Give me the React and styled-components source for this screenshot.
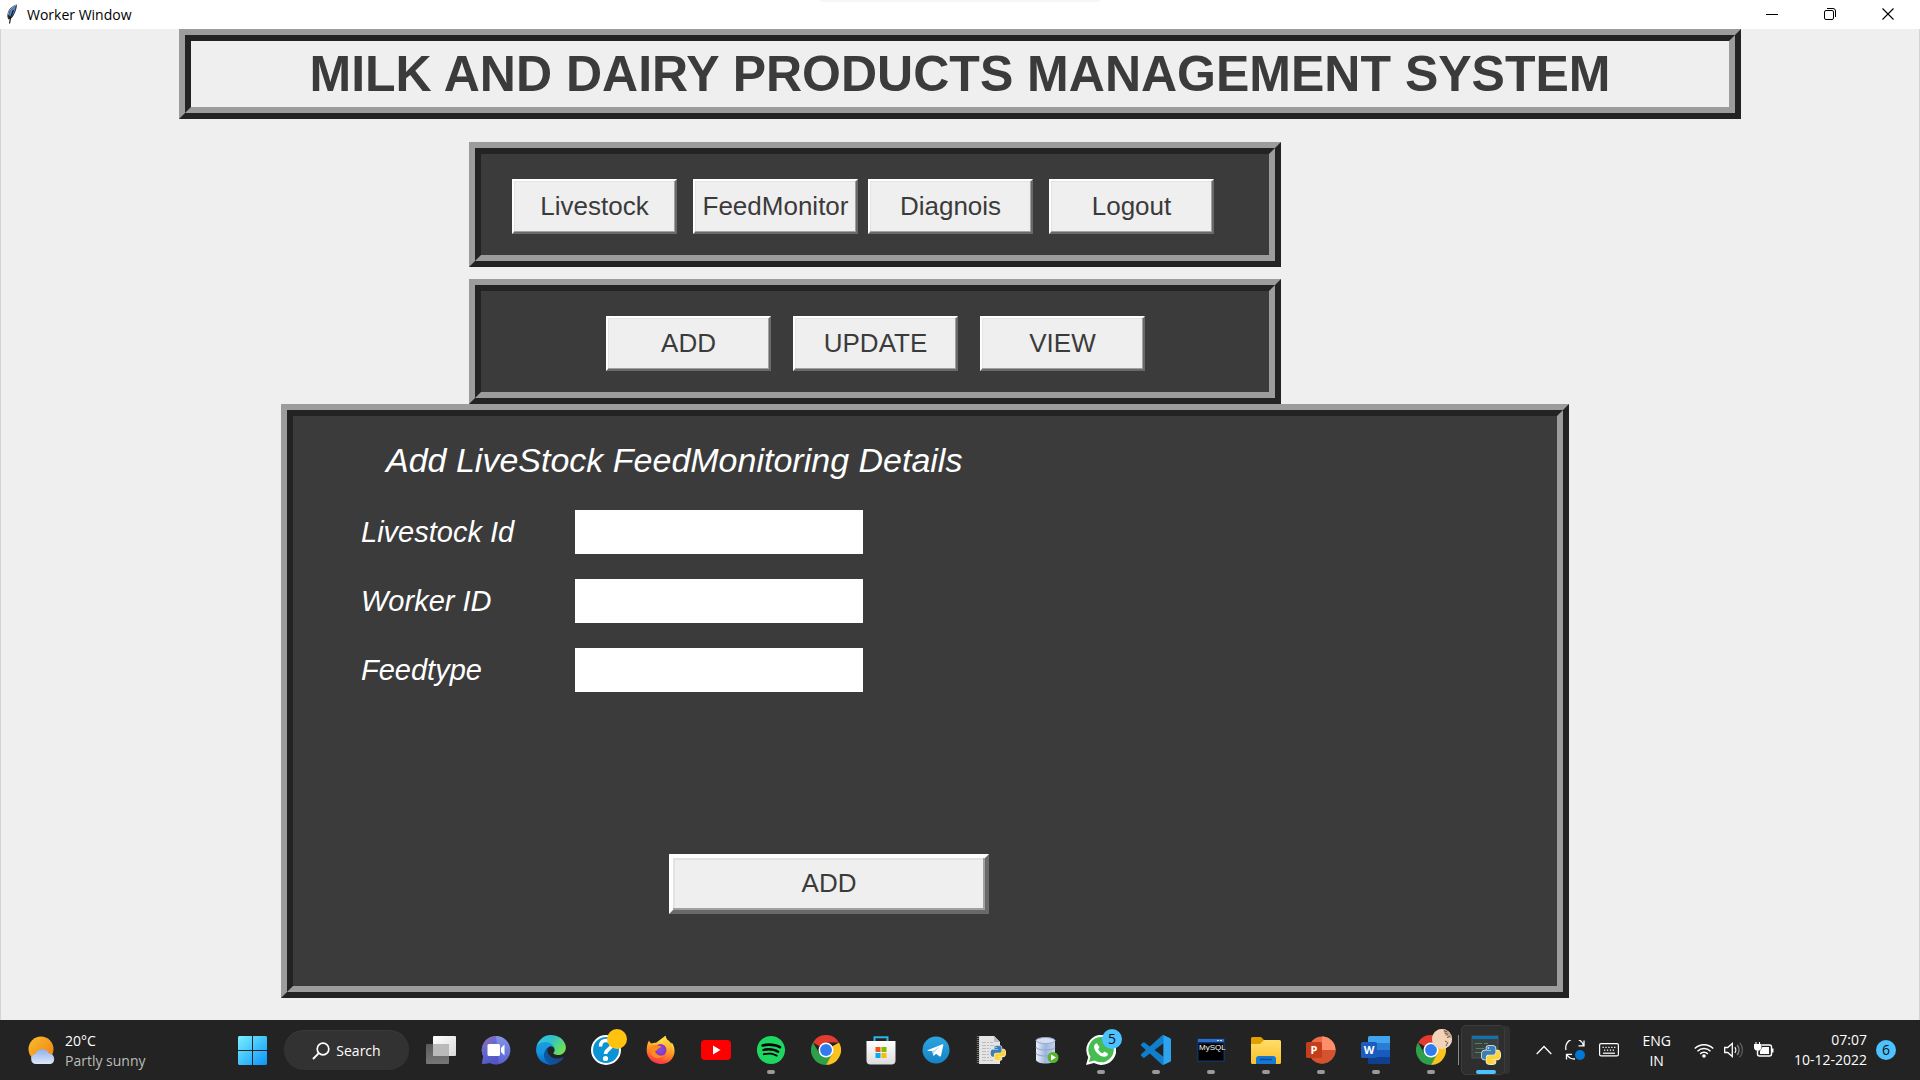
import React from "react";
import styled, { createGlobalStyle, css } from "styled-components";
import { FaSpotify } from "react-icons/fa";

const ui = '"Open Sans", "Noto Sans", sans-serif';
const tk = '"Liberation Sans", Arial, sans-serif';

const Global = createGlobalStyle`
  * { box-sizing: border-box; }
  body { margin: 0; background: #efefef; font-family: ${tk}; }
  button { font-family: inherit; margin: 0; }
  svg { display: block; }
`;

const Desktop = styled.div`
  display: flex;
  flex-direction: column;
  min-height: 100vh;
`;

/* ---------- window chrome ---------- */

const TitleBar = styled.header`
  position: relative;
  display: flex;
  align-items: center;
  height: 29px;
  padding: 0 3px 0 6px;
  background: #fff;
  font-family: ${ui};
`;

const PeekShadow = styled.div`
  position: absolute;
  top: 0;
  left: 50%;
  width: 280px;
  height: 2px;
  margin-left: -140px;
  border-radius: 0 0 4px 4px;
  background: #f6f6f6;
`;

const WindowTitle = styled.span`
  flex: 1;
  margin-left: 9px;
  font-size: 14px;
  line-height: 20px;
  color: #000;
`;

const WindowButton = styled.button`
  display: grid;
  place-items: center;
  width: 58px;
  height: 29px;
  padding: 0 0 2px;
  border: 0;
  background: transparent;
`;

/* ---------- tk frames ---------- */

const Stage = styled.main`
  flex: 1;
  border: solid #d4d4d4;
  border-width: 0 1px;
  background: #efefef;
`;

const Band = styled.div`
  display: grid;
  grid-template-columns: ${(p) => p.$columns};
  margin-top: ${(p) => p.$gap || 0}px;

  > * {
    grid-column: 2;
  }
`;

const ridge = css`
  border: 6px solid;
  border-color: #9c9c9c #232323 #232323 #9c9c9c;
`;

const Ridge = styled.div`
  ${ridge}
`;

const Groove = styled.div`
  height: 100%;
  border: 6px solid;
  border-color: #232323 #9c9c9c #9c9c9c #232323;
  background: ${(p) => (p.$light ? "#efefef" : "#3b3b3b")};
`;

const Banner = styled.h1`
  margin: 0;
  padding: 3px 0;
  text-align: center;
  font-size: 50px;
  line-height: 60px;
  font-weight: 700;
  color: #3b3b3b;
`;

const ButtonRow = styled.nav`
  display: flex;
  gap: ${(p) => p.$gap}px;
  padding: 25px 0 21px ${(p) => p.$start}px;
`;

const ButtonPair = styled.div`
  display: flex;
  gap: 16px;
`;

const TkButton = styled.button`
  width: ${(p) => (p.$large ? 320 : 165)}px;
  height: ${(p) => (p.$large ? 60 : 55)}px;
  padding: 0 0 2px;
  border: ${(p) => (p.$large ? 4 : 2)}px solid;
  border-color: #fff #696969 #696969 #fff;
  background: #efefef;
  box-shadow: ${(p) =>
    p.$large
      ? "inset -2px -2px #a0a0a0, inset 2px 2px #e3e3e3"
      : "inset -1px -1px #a0a0a0, inset 1px 1px #e3e3e3"};
  font-size: 26px;
  line-height: 30px;
  color: #3b3b3b;
  white-space: nowrap;
`;

const Form = styled.form`
  padding: 24px 0 72px 68px;
  font-style: italic;
  color: #fff;
`;

const FormTitle = styled.h2`
  margin: 0 0 30px 25px;
  font-size: 34px;
  line-height: 40px;
  font-weight: 400;
`;

const Fields = styled.div`
  display: grid;
  gap: 25px;
`;

const Field = styled.div`
  display: grid;
  grid-template-columns: 214px 288px;
  align-items: center;
`;

const FieldLabel = styled.label`
  font-size: 29px;
  line-height: 34px;
`;

const Entry = styled.input`
  width: 100%;
  height: 44px;
  padding: 0 8px;
  border: 0;
  border-radius: 0;
  background: #fff;
  font: italic 26px ${tk};
  color: #3b3b3b;
`;

const Actions = styled.div`
  padding: 162px 0 0 308px;
`;

/* ---------- taskbar ---------- */

const Taskbar = styled.footer`
  display: grid;
  grid-template-columns: 238px auto 1fr;
  align-items: center;
  height: 60px;
  background: #232323;
  font-family: ${ui};
  font-size: 14px;
  line-height: 20px;
  color: #fff;
`;

const Weather = styled.button`
  display: flex;
  align-items: center;
  gap: 9px;
  padding: 0 0 0 28px;
  border: 0;
  background: transparent;
  font-size: 14px;
  line-height: 20px;
  text-align: left;
  color: #fff;
`;

const WeatherText = styled.div`
  padding-top: 2px;
`;

const Muted = styled.div`
  color: #bdbdbd;
`;

const Apps = styled.div`
  display: flex;
  align-items: center;
`;

const StartButton = styled.button`
  padding: 0;
  border: 0;
  background: transparent;
`;

const SearchButton = styled.button`
  display: flex;
  align-items: center;
  justify-content: center;
  gap: 6px;
  width: 125px;
  height: 40px;
  margin: 0 4px 0 17px;
  padding: 1px 0 0;
  border: 0;
  border-radius: 20px;
  background: #323232;
  box-shadow: inset 0 1px #3a3a3a;
  font-size: 14px;
  line-height: 20px;
  color: #fff;
`;

const AppButton = styled.button`
  position: relative;
  display: grid;
  place-items: center;
  width: 55px;
  height: 60px;
  padding: 0;
  border: 0;
  background: transparent;

  &::after {
    content: "";
    position: absolute;
    bottom: 6px;
    left: 50%;
    width: ${(p) => (p.$active ? 20 : 8)}px;
    height: 4px;
    margin-left: ${(p) => (p.$active ? -10 : -4)}px;
    border-radius: 2px;
    background: ${(p) =>
      p.$active ? "#4cc2ff" : p.$open ? "#9a9a9a" : "transparent"};
  }
`;

const ActiveTile = styled.span`
  position: absolute;
  top: 5px;
  left: 3px;
  width: 44px;
  height: 50px;
  border: 1px solid #3c3c3c;
  border-radius: 5px;
  background: #2e2e2e;
  box-shadow: 6px 0 0 -1px #313131;
`;

const Divider = styled.span`
  position: absolute;
  top: 15px;
  left: 0;
  width: 1px;
  height: 30px;
  background: #8a8a8a;
`;

const AppIcon = styled.span`
  position: relative;
`;

const AppBadge = styled.span`
  position: absolute;
  top: 9px;
  left: 29px;
  width: 20px;
  height: 20px;
  border-radius: 50%;
  background: ${(p) => p.$color};
  font-size: 14px;
  line-height: 20px;
  text-align: center;
  color: #111;
`;

const Tray = styled.div`
  display: flex;
  align-items: center;
  justify-self: end;
  gap: 20px;
  padding-right: 24px;
`;

const TrayGroup = styled.div`
  display: flex;
  align-items: center;
  gap: ${(p) => p.$gap}px;
`;

const Lang = styled.div`
  padding: 2px 3px 0;
  text-align: center;
`;

const Clock = styled.time`
  text-align: right;
`;

const Count = styled.span`
  width: 20px;
  height: 20px;
  border-radius: 50%;
  background: #4cc2ff;
  text-align: center;
  color: #111;
`;

/* ---------- drawings ---------- */

const Svg = ({ size = 30, w, h, children, box }) => (
  <svg
    width={w || size}
    height={h || size}
    viewBox={box || `0 0 ${w || size} ${h || size}`}
    fill="none"
    aria-hidden="true"
  >
    {children}
  </svg>
);

const Gradient = ({ id, stops, x2 = 0, y2 = 1 }) => (
  <linearGradient id={id} x1="0" y1="0" x2={x2} y2={y2}>
    {stops.map((c, i) => (
      <stop key={i} offset={i / (stops.length - 1)} stopColor={c} />
    ))}
  </linearGradient>
);

const Feather = () => (
  <Svg w={12} h={21}>
    <path d="M10.8 0.5C6.5 1.5 2.5 5 1.5 10c-.4 2 0 4.200 1 5.500C5 15.500 7 13 8.800 9 10.200 6 11 3 10.800.5z" fill="#23282f" />
    <path d="M9.800 1.500C6 3.500 3.500 7 3 11.500l2 1.500C8 10.500 9.500 6 9.800 1.500z" fill="#4f86cf" />
    <path d="M10.300 1C6.500 2.500 2.800 6 2 11" stroke="#a9adb3" />
    <path d="M7.500 6C5.500 10 4 14 3.500 19.500" stroke="#15181c" strokeWidth="1.200" />
  </Svg>
);

const WeatherIcon = () => (
  <Svg w={28} h={28}>
    <defs>
      <Gradient id="sun" stops={["#f8c02c", "#f07a12"]} x2={1} />
      <Gradient id="cloud" stops={["#8fb0ea", "#dfe8fa"]} />
    </defs>
    <circle cx="13" cy="13" r="12.500" fill="url(#sun)" />
    <path d="M8 28a5 5 0 0 1-.8-9.900A7.500 7.500 0 0 1 21 17.500 5.400 5.400 0 0 1 22.500 28z" fill="url(#cloud)" />
    <path d="M3.500 22c3-3 7-3 9 0" stroke="#b9cdf3" strokeWidth="1.500" />
  </Svg>
);

const StartIcon = () => (
  <Svg w={29} h={29}>
    <defs>
      <linearGradient id="win" gradientUnits="userSpaceOnUse" x1="0" y1="0" x2="29" y2="29">
        <stop offset="0" stopColor="#7af0ff" />
        <stop offset="1" stopColor="#0a94f8" />
      </linearGradient>
    </defs>
    <path d="M1 0h13v14H0V1zM15 0h13l1 1v13H15zM0 15h14v14H1l-1-1zM15 15h14v13l-1 1H15z" fill="url(#win)" />
  </Svg>
);

const TaskView = () => (
  <Svg>
    <defs>
      <Gradient id="tvf" stops={["#ffffff", "#d9d9d9"]} x2={1} />
      <Gradient id="tvb" stops={["#5a5a5a", "#777777"]} />
    </defs>
    <rect x="0" y="9" width="23" height="20" rx="1" fill="url(#tvb)" />
    <rect x="7" y="1" width="23" height="20" rx="1" fill="url(#tvf)" />
    <path d="M7 9h16v12H8l-1-1z" fill="#b9b9b9" />
  </Svg>
);

const ChatIcon = () => (
  <Svg>
    <defs>
      <Gradient id="chat" stops={["#a061a8", "#6264c8", "#4f52c4"]} x2={0.6} />
      <Gradient id="chat2" stops={["#8496e6", "#5a5fd0"]} />
    </defs>
    <path d="M15 1a14.200 14.200 0 1 1-6 27L1 29l1.200-7.500A14.200 14.200 0 0 1 15 1z" fill="url(#chat2)" />
    <path d="M15 1a14.200 14.200 0 0 0-12.800 20.500L1 29l8-1a14.200 14.200 0 0 0 9 .8z" fill="url(#chat)" opacity=".8" />
    <rect x="6.500" y="9" width="12.500" height="12" rx="1.500" fill="#fff" />
    <path d="M20 13l3.500-3.500V20.500L20 17z" fill="#fff" />
  </Svg>
);

const EdgeIcon = () => (
  <Svg box="4 4 258 258">
    <defs>
      <Gradient id="e1" stops={["#0c59a4", "#114a8b"]} x2={1} y2={0} />
      <Gradient id="e2" stops={["#1b9de2", "#1595df", "#0667c8"]} />
      <Gradient id="e3" stops={["#35c1f1", "#2fc2c9", "#6be05a"]} x2={1} y2={0.5} />
    </defs>
    <path fill="url(#e1)" d="M235.680 195.460a93.730 93.730 0 0 1-10.540 4.710 101.870 101.870 0 0 1-35.900 6.460c-47.320 0-88.540-32.550-88.540-74.320A31.480 31.480 0 0 1 117.130 104.600c-42.800 1.800-53.800 46.400-53.800 72.530 0 73.880 68.090 81.370 82.760 81.370 7.910 0 19.840-2.300 27-4.560l1.310-.44a128.340 128.340 0 0 0 66.600-52.800 4 4 0 0 0-5.320-5.240z" />
    <path fill="url(#e2)" d="M110.340 246.340A79.200 79.200 0 0 1 87.600 225a80.720 80.720 0 0 1 29.530-120.400c3.120-1.470 8.450-4.130 15.540-4a32.350 32.350 0 0 1 25.690 13 31.880 31.880 0 0 1 6.360 18.660c0-.21 24.460-79.600-80-79.600-43.900 0-80 41.660-80 78.210a130.150 130.150 0 0 0 12.110 56 128 128 0 0 0 156.380 67.110 75.550 75.550 0 0 1-62.780-8z" />
    <path fill="url(#e3)" d="M156.940 153.780c-.81 1.050-3.300 2.500-3.300 5.660 0 2.610 1.700 5.120 4.720 7.230 14.380 10 41.490 8.680 41.560 8.680a59.560 59.560 0 0 0 30.270-8.350 61.380 61.380 0 0 0 30.430-52.880c.26-22.410-8-37.310-11.340-43.910-21.190-41.450-66.930-65.290-116.670-65.290a128 128 0 0 0-128 126.200c.48-36.540 36.800-66.050 80-66.050 3.500 0 23.460.34 42 10.070 16.340 8.580 24.900 18.940 30.850 29.210 6.180 10.670 7.280 24.150 7.280 29.520s-2.740 13.330-7.800 19.910z" />
  </Svg>
);

const HelpIcon = () => (
  <Svg>
    <circle cx="15" cy="15" r="14" fill="#0a94d6" stroke="#fff" strokeWidth="2" />
    <path d="M9.500 11.500C9.500 7 12 5.500 15 5.500c3.500 0 5.500 2 5.500 4.500 0 4.500-6 4-6 9" stroke="#fff" strokeWidth="3.600" />
    <circle cx="14.500" cy="23.500" r="2.600" fill="#fff" />
  </Svg>
);

const FirefoxIcon = () => (
  <Svg>
    <defs>
      <Gradient id="ff" stops={["#ffe04a", "#ff9a1f", "#ff4a3a", "#e3197c"]} x2={-0.3} />
      <Gradient id="ff2" stops={["#ffe545", "#ffb22c", "#ff6a2a"]} />
      <radialGradient id="ffg">
        <stop offset="0" stopColor="#7b4df0" />
        <stop offset="1" stopColor="#8f35b8" />
      </radialGradient>
    </defs>
    <path d="M3 5.500c.5 1.500 1.500 2.500 2.500 3 1.500-.8 3-1 4.500-.8L19.500.8c.3 2.200 1 3.600 3 5 1.500 1 2 2 2.500 3.200l.8-1.500c2 3 3.200 6 2.700 10C27.500 24.500 22 29 15 29S1.500 24 .8 17C.4 12.500 1.200 8.500 3 5.500z" fill="url(#ff)" />
    <path d="M19.500.8c.3 2.200 1 3.600 3 5 3.500 3 5 8 3 13-2 4.500-6 7-10.500 6.700 5-2 7.500-6 6.500-10.500-.7-3-3.500-4.500-4.500-7.500-.8-2.500.8-5.200 2.500-6.700z" fill="url(#ff2)" />
    <circle cx="14.500" cy="15" r="6" fill="url(#ffg)" />
    <path d="M4.500 12c2-2 5-2.500 7-1.500 2 .2 3 1 4 1-.8 1.500-3 1.500-3.500 2.500-.6 1.500-2 2-3 2 1 4 5 5.500 8.500 4.500-3 3.500-8.500 3.500-11.500 0-2-2.300-2.500-5.500-1.500-8.500z" fill="#ff8a1e" />
  </Svg>
);

const YoutubeIcon = () => (
  <Svg>
    <rect x="0" y="5" width="30" height="20" rx="4" fill="#f00" />
    <path d="M12 10.500l7.500 4.500-7.500 4.500z" fill="#fff" />
  </Svg>
);

const SpotifyIcon = () => (
  <Svg>
    <circle cx="15" cy="15" r="13.500" fill="#000" />
    <FaSpotify x="0.500" y="0.500" size={29} color="#1ed760" />
  </Svg>
);

const ChromeIcon = () => (
  <Svg box="0 0 48 48">
    <path d="M24 24L3.200 12A24 24 0 0 1 44.800 12H24z" fill="#e33b2e" />
    <path d="M24 24L44.800 12A24 24 0 0 1 24 48l10.400-18z" fill="#fcc31e" />
    <path d="M24 48A24 24 0 0 1 3.200 12l10.400 18L24 36l4 2z" fill="#2da04a" />
    <path d="M24 48l10.400-18L24 33z" fill="#fcc31e" />
    <path d="M13.600 30L24 36l10.400-6L24 48z" fill="#2da04a" />
    <path d="M24 48l10.400-18 4-10z" fill="#fcc31e" />
    <circle cx="24" cy="24" r="12" fill="#fff" />
    <circle cx="24" cy="24" r="9.500" fill="#2f7cf0" />
  </Svg>
);

const StoreIcon = () => (
  <Svg>
    <defs>
      <Gradient id="store" stops={["#ffffff", "#dcdcdc"]} />
    </defs>
    <path d="M8.500 8V2.200h13V8" stroke="#2cb4e8" strokeWidth="2" />
    <path d="M.5 6h29v19.500a4 4 0 0 1-4 4h-21a4 4 0 0 1-4-4z" fill="url(#store)" />
    <path d="M9.500 12h5v5h-5z" fill="#f1511b" />
    <path d="M15.500 12h5v5h-5z" fill="#80bb01" />
    <path d="M9.500 18h5v5h-5z" fill="#00adef" />
    <path d="M15.500 18h5v5h-5z" fill="#fbbc09" />
  </Svg>
);

const TelegramIcon = () => (
  <Svg>
    <defs>
      <Gradient id="tg" stops={["#2ba6e0", "#1583c6"]} />
    </defs>
    <circle cx="15" cy="15" r="13.500" fill="url(#tg)" />
    <path d="M7 15L21.500 9.200c.6-.2 1 .1.8.9l-2.300 10.700c-.2.800-.7 1-1.300.6l-3.700-2.700-1.900 1.900c-.4.3-.8.2-.9-.3l-1-4.200L7 16c-.8-.2-.7-.7 0-1z" fill="#fff" />
    <path d="M11.200 16.200l8-5-6.200 6.200-.4 3z" fill="#b9d8ee" />
  </Svg>
);

const snake =
  "M14.250.18l.9.200.730.260.590.300.450.320.340.340.250.340.160.330.1.300.040.260.020.200-.01.130V8.500l-.05.630-.13.550-.21.460-.26.380-.3.310-.33.250-.35.190-.35.140-.33.100-.3.070-.26.040-.21.020H8.770l-.69.050-.59.140-.5.220-.41.270-.33.320-.27.350-.2.360-.15.370-.1.350-.07.320-.04.270-.02.210v3.060H3.170l-.21-.03-.28-.07-.32-.12-.35-.18-.36-.26-.36-.36-.35-.46-.32-.59-.28-.73-.21-.88-.14-1.050-.05-1.230.06-1.220.16-1.040.24-.87.32-.71.36-.57.4-.44.42-.33.42-.24.4-.16.36-.1.32-.05.24-.01h.16l.06.010h8.160v-.83H6.180l-.01-2.750-.02-.37.050-.34.110-.31.170-.28.250-.26.310-.23.380-.2.440-.18.510-.15.580-.12.640-.1.710-.06.770-.04.840-.02 1.270.050zm-6.300 1.980l-.23.330-.08.410.08.410.23.340.33.220.41.090.41-.09.33-.22.23-.34.08-.41-.08-.41-.23-.33-.33-.22-.41-.09-.41.090z";

const PythonMark = ({ x, y, size }) => (
  <svg x={x} y={y} width={size} height={size} viewBox="-1 -1 26 26">
    <path d={snake} fill="none" stroke="#eef2f4" strokeWidth="2" />
    <path d={snake} fill="none" stroke="#eef2f4" strokeWidth="2" transform="rotate(180 12 12)" />
    <path d={snake} fill="#3d7fb5" />
    <path d={snake} fill="#ffd43b" transform="rotate(180 12 12)" />
  </svg>
);

const PyFileIcon = () => (
  <Svg>
    <path d="M3 1h15l6 6v22H3z" fill="#e4e4e4" />
    <path d="M18 1v6h6z" fill="#bdbdbd" />
    <path d="M2 1v28" stroke="#6e6e6e" strokeWidth="2.500" strokeDasharray="1 1" />
    <path d="M6 7.500h11M6 10.500h15M6 13.500h9M6 16.500h7M6 19.500h8M6 22.500h9M6 25.500h11" stroke="#bcbcbc" strokeDasharray="4 1 2 1" />
    <PythonMark x={14} y={10} size={16} />
  </Svg>
);

const DatabaseIcon = () => (
  <Svg>
    <defs>
      <Gradient id="db" stops={["#eaf0fa", "#9fb6dc", "#c3d2ec"]} x2={1} y2={0} />
    </defs>
    <path d="M5 5.500v19c0 2.500 4.500 4 9.500 4s9.500-1.500 9.500-4v-19z" fill="url(#db)" />
    <ellipse cx="14.500" cy="5.500" rx="9.500" ry="3" fill="#d5dff0" stroke="#94a9cf" />
    <path d="M5 12c0 4 19 4 19 0M5 18c0 4 19 4 19 0" stroke="#8ea5cf" />
    <circle cx="22" cy="22.500" r="5.500" fill="#56b52c" />
    <path d="M20 19.500l5 3-5 3z" fill="#fff" />
  </Svg>
);

const WhatsappIcon = () => (
  <Svg>
    <path d="M0 30l2.200-7.800A15 15 0 1 1 8 28z" fill="#fff" />
    <path d="M3 27l1.500-5.300A12.700 12.700 0 1 1 8.500 25.500z" fill="#45bd50" />
    <path d="M11 8.200l-1.700.8c-2.500 2.500-.8 6.500 2.200 9.500s7.500 4.500 9.800 2.200l.8-1.900-3.600-2.200-1.900 1.700c-2-.8-3.600-2.400-4.400-4.400l1.300-1.700z" fill="#fff" />
  </Svg>
);

const VsCodeIcon = () => (
  <Svg box="0 0 24 24">
    <path
      d="M23.150 2.587L18.210.210a1.494 1.494 0 0 0-1.705.290l-9.460 8.630-4.120-3.128a.999.999 0 0 0-1.276.057L.327 7.261A1 1 0 0 0 .326 8.740L3.899 12 .326 15.260a1 1 0 0 0 .001 1.479L1.650 17.940a.999.999 0 0 0 1.276.057l4.120-3.128 9.460 8.630a1.492 1.492 0 0 0 1.704.290l4.942-2.377A1.500 1.500 0 0 0 24 20.060V3.939a1.500 1.500 0 0 0-.85-1.352zm-5.146 14.861L10.826 12l7.178-5.448v10.896z"
      fill="#0f7fcc"
    />
    <path d="M18 .2l5.200 2.400a1.500 1.500 0 0 1 .8 1.300v16.200a1.500 1.500 0 0 1-.8 1.300L18 23.800z" fill="#2ea3ee" />
  </Svg>
);

const MysqlIcon = () => (
  <Svg>
    <rect x="1" y="3.500" width="28" height="23.500" fill="#16325c" />
    <path d="M2 4h26v3H2z" fill="#2a6fd0" />
    <path d="M21 5.500h2M24 5.500h2" stroke="#cfe0f7" />
    <path d="M2.500 8.500h25v17h-25z" fill="#000" />
    <text x="3" y="15" fontFamily="Liberation Sans, sans-serif" fontSize="8" fill="#fff">
      MySQL
    </text>
  </Svg>
);

const FolderIcon = () => (
  <Svg>
    <defs>
      <Gradient id="fold" stops={["#ffdd68", "#fbc02a"]} />
    </defs>
    <path d="M0 3.500A1.500 1.500 0 0 1 1.500 2H10l3 3v5H0z" fill="#e0a100" />
    <path d="M0 9h9l4-4h15.500A1.500 1.500 0 0 1 30 6.500v21a1.500 1.500 0 0 1-1.500 1.500h-27A1.500 1.500 0 0 1 0 27.500z" fill="url(#fold)" />
    <path d="M5 29v-5a3 3 0 0 1 3-3h14a3 3 0 0 1 3 3v5z" fill="#1478d4" />
    <path d="M9 24.500h12" stroke="#0b4f94" strokeWidth="1.500" />
  </Svg>
);

const OfficeTile = ({ letter, color }) => (
  <>
    <rect x="0" y="7" width="16" height="16" rx="1.500" fill={color} />
    <text x="8" y="19" textAnchor="middle" fontFamily="Open Sans, sans-serif" fontWeight="700" fontSize="11" fill="#fff">
      {letter}
    </text>
  </>
);

const PowerpointIcon = () => (
  <Svg>
    <circle cx="16" cy="15" r="13.500" fill="#ed6c47" />
    <path d="M16 1.500A13.500 13.500 0 0 1 29.500 15H16z" fill="#ff8f6b" />
    <path d="M2.500 15h27a13.500 13.500 0 0 1-27 0z" fill="#d35230" />
    <OfficeTile letter="P" color="#c43e1c" />
  </Svg>
);

const WordIcon = () => (
  <Svg>
    <path d="M7 2.500A1.500 1.500 0 0 1 8.500 1H29v7H7z" fill="#41a5ee" />
    <path d="M7 8h22v7H7z" fill="#2b7cd3" />
    <path d="M7 15h22v7H7z" fill="#185abd" />
    <path d="M7 22h22v7H8.500A1.500 1.500 0 0 1 7 27.500z" fill="#103f91" />
    <OfficeTile letter="W" color="#1b5cbe" />
  </Svg>
);

const Avatar = () => (
  <Svg w={20} h={20}>
    <circle cx="10" cy="10" r="10" fill="#f3d3b8" />
    <path d="M11 .1A10 10 0 0 1 20 9c-1 1-2-1-3-1s-2-1-3-1-1-2-2-3z" fill="#c9a88e" />
    <path d="M13 4l3 1.500M15 8.500l3-1M13 12l2 1M16 13l-2 4M12 2l3 .5" stroke="#6b584b" />
  </Svg>
);

const IdleIcon = () => (
  <Svg w={32} h={30}>
    <rect x="2" y="1" width="26" height="22" fill="#3a3f42" stroke="#4c5256" />
    <path d="M2 1h26v3H2z" fill="#1173ae" />
    <path d="M5 8.500h7M14 8.500h4M6 13.500h8M5 17.500h6" stroke="#4b8a4a" />
    <PythonMark x={11} y={10} size={20} />
  </Svg>
);

const SearchIcon = () => (
  <Svg w={18} h={18}>
    <circle cx="11" cy="7" r="5.800" stroke="#fff" strokeWidth="1.700" />
    <path d="M6.800 11.200L1 17" stroke="#fff" strokeWidth="1.900" />
  </Svg>
);

const ChevronUp = () => (
  <Svg w={16} h={16}>
    <path d="M.7 12L8 4.500l7.300 7.500" stroke="#fff" strokeWidth="1.300" />
  </Svg>
);

const SyncIcon = () => (
  <Svg w={21} h={20}>
    <path d="M1 10A9 9 0 0 1 18.500 5.500M19 .5v5.300h-5.500" stroke="#fff" strokeWidth="1.300" />
    <path d="M1.500 19.500v-5.200H7M1.800 14.500A9 9 0 0 0 10 19" stroke="#fff" strokeWidth="1.300" />
    <circle cx="15" cy="15" r="5" fill="#0078d7" />
  </Svg>
);

const KeyboardIcon = () => (
  <Svg w={20} h={14}>
    <rect x=".6" y=".6" width="18.800" height="12.300" rx="1.500" stroke="#fff" strokeWidth="1.200" />
    <path d="M3.500 4.300h13" stroke="#fff" strokeWidth="1.300" strokeDasharray="1.300 1.600" />
    <path d="M5 7.200h10.500" stroke="#fff" strokeWidth="1.300" strokeDasharray="1.300 1.600" />
    <path d="M4 10.200h12" stroke="#fff" strokeWidth="1.200" />
  </Svg>
);

const WifiIcon = () => (
  <Svg w={20} h={16}>
    <path d="M.8 6.500a13 13 0 0 1 18.400 0M3.500 9.200a9.200 9.200 0 0 1 13 0M6.200 11.900a5.400 5.400 0 0 1 7.600 0" stroke="#fff" strokeWidth="1.500" />
    <circle cx="10" cy="14" r="1.800" fill="#fff" />
  </Svg>
);

const VolumeIcon = () => (
  <Svg w={20} h={16}>
    <path d="M.7 5.500h3L8.300 1.500v13L3.700 10.500h-3z" stroke="#fff" strokeWidth="1.300" />
    <path d="M10.800 5.200c1.300 1.500 1.300 4.100 0 5.600" stroke="#fff" strokeWidth="1.300" />
    <path d="M13.200 3c2.500 2.800 2.500 7.200 0 10" stroke="#8a8a8a" strokeWidth="1.300" />
    <path d="M15.700.8c3.700 4 3.700 10.400 0 14.400" stroke="#5c5c5c" strokeWidth="1.300" />
  </Svg>
);

const BatteryIcon = () => (
  <Svg w={20} h={16}>
    <path d="M8 3h7.500a2 2 0 0 1 2 2v7a2 2 0 0 1-2 2H5.500a2 2 0 0 1-2-2V9" stroke="#fff" strokeWidth="1.400" />
    <path d="M8.500 5h6.500v7H6V9z" fill="#fff" />
    <path d="M18 6.500h1.500v4H18z" fill="#fff" />
    <path d="M.5 2.500h6.500V5a3 3 0 0 1-6.500 0zM2 0v3M5.500 0v3M3.700 7v3" fill="#fff" stroke="#fff" strokeWidth="1.100" />
  </Svg>
);

const apps = [
  { name: "Task View", Icon: TaskView },
  { name: "Chat", Icon: ChatIcon },
  { name: "Microsoft Edge", Icon: EdgeIcon },
  { name: "Get Help", Icon: HelpIcon, badge: "#ffc20e" },
  { name: "Firefox", Icon: FirefoxIcon },
  { name: "YouTube", Icon: YoutubeIcon },
  { name: "Spotify", Icon: SpotifyIcon, open: true },
  { name: "Chrome", Icon: ChromeIcon },
  { name: "Microsoft Store", Icon: StoreIcon },
  { name: "Telegram", Icon: TelegramIcon },
  { name: "Python File", Icon: PyFileIcon },
  { name: "Database", Icon: DatabaseIcon },
  { name: "WhatsApp", Icon: WhatsappIcon, open: true, badge: "#4cc2ff", count: 5 },
  { name: "Visual Studio Code", Icon: VsCodeIcon, open: true },
  { name: "MySQL", Icon: MysqlIcon, open: true },
  { name: "File Explorer", Icon: FolderIcon, open: true },
  { name: "PowerPoint", Icon: PowerpointIcon, open: true },
  { name: "Word", Icon: WordIcon, open: true },
  { name: "Chrome profile", Icon: ChromeIcon, open: true, badge: "#f3d3b8", avatar: true },
  { name: "Worker Window", Icon: IdleIcon, active: true },
];

const Frame = ({ light, children }) => (
  <Ridge>
    <Groove $light={light}>{children}</Groove>
  </Ridge>
);

const fields = [
  ["livestock", "Livestock Id"],
  ["worker", "Worker ID"],
  ["feedtype", "Feedtype"],
];

const wide = "178fr 1562fr 178fr";
const menu = "468fr 812fr 638fr";
const panel = "280fr 1288fr 350fr";

export default function App() {
  return (
    <Desktop>
      <Global />
      <TitleBar>
        <PeekShadow />
        <Feather />
        <WindowTitle>Worker Window</WindowTitle>
        <WindowButton aria-label="Minimize">
          <Svg w={12} h={12}>
            <path d="M0 6.500h12" stroke="#000" />
          </Svg>
        </WindowButton>
        <WindowButton aria-label="Restore">
          <Svg w={12} h={12}>
            <rect x=".5" y="2.500" width="9" height="9" rx="1.500" stroke="#000" />
            <path d="M3 .5h6a2.500 2.500 0 0 1 2.500 2.500v6" stroke="#000" />
          </Svg>
        </WindowButton>
        <WindowButton aria-label="Close">
          <Svg w={12} h={12}>
            <path d="M.5.5l11 11M11.500.5l-11 11" stroke="#000" strokeWidth="1.100" />
          </Svg>
        </WindowButton>
      </TitleBar>

      <Stage>
        <Band $columns={wide}>
          <Frame light>
            <Banner>MILK AND DAIRY PRODUCTS MANAGEMENT SYSTEM</Banner>
          </Frame>
        </Band>

        <Band $columns={menu} $gap={23}>
          <Frame>
            <ButtonRow $gap={10} $start={31}>
              <ButtonPair>
                <TkButton>Livestock</TkButton>
                <TkButton>FeedMonitor</TkButton>
              </ButtonPair>
              <ButtonPair>
                <TkButton>Diagnois</TkButton>
                <TkButton>Logout</TkButton>
              </ButtonPair>
            </ButtonRow>
          </Frame>
        </Band>

        <Band $columns={menu} $gap={12}>
          <Frame>
            <ButtonRow $gap={22} $start={125}>
              <TkButton>ADD</TkButton>
              <TkButton>UPDATE</TkButton>
              <TkButton>VIEW</TkButton>
            </ButtonRow>
          </Frame>
        </Band>

        <Band $columns={panel}>
          <Frame>
            <Form onSubmit={(e) => e.preventDefault()}>
              <FormTitle>Add LiveStock FeedMonitoring Details</FormTitle>
              <Fields>
                {fields.map(([id, label]) => (
                  <Field key={id}>
                    <FieldLabel htmlFor={id}>{label}</FieldLabel>
                    <Entry id={id} type="text" />
                  </Field>
                ))}
              </Fields>
              <Actions>
                <TkButton $large type="submit">
                  ADD
                </TkButton>
              </Actions>
            </Form>
          </Frame>
        </Band>
      </Stage>

      <Taskbar>
        <Weather>
          <WeatherIcon />
          <WeatherText>
            <div>20°C</div>
            <Muted>Partly sunny</Muted>
          </WeatherText>
        </Weather>
        <Apps>
          <StartButton aria-label="Start">
            <StartIcon />
          </StartButton>
          <SearchButton>
            <SearchIcon />
            Search
          </SearchButton>
          {apps.map(({ name, Icon, open, active, badge, count, avatar }) => (
            <AppButton key={name} aria-label={name} $open={open} $active={active}>
              {active && <Divider />}
              {active && <ActiveTile />}
              <AppIcon>
                <Icon />
              </AppIcon>
              {badge && (
                <AppBadge $color={badge}>{avatar ? <Avatar /> : count}</AppBadge>
              )}
            </AppButton>
          ))}
        </Apps>
        <Tray>
          <TrayGroup $gap={13}>
            <ChevronUp />
            <SyncIcon />
            <KeyboardIcon />
          </TrayGroup>
          <Lang>
            ENG
            <br />
            IN
          </Lang>
          <TrayGroup $gap={10}>
            <WifiIcon />
            <VolumeIcon />
            <BatteryIcon />
          </TrayGroup>
          <TrayGroup $gap={9}>
            <Clock>
              07:07
              <br />
              10-12-2022
            </Clock>
            <Count>6</Count>
          </TrayGroup>
        </Tray>
      </Taskbar>
    </Desktop>
  );
}
